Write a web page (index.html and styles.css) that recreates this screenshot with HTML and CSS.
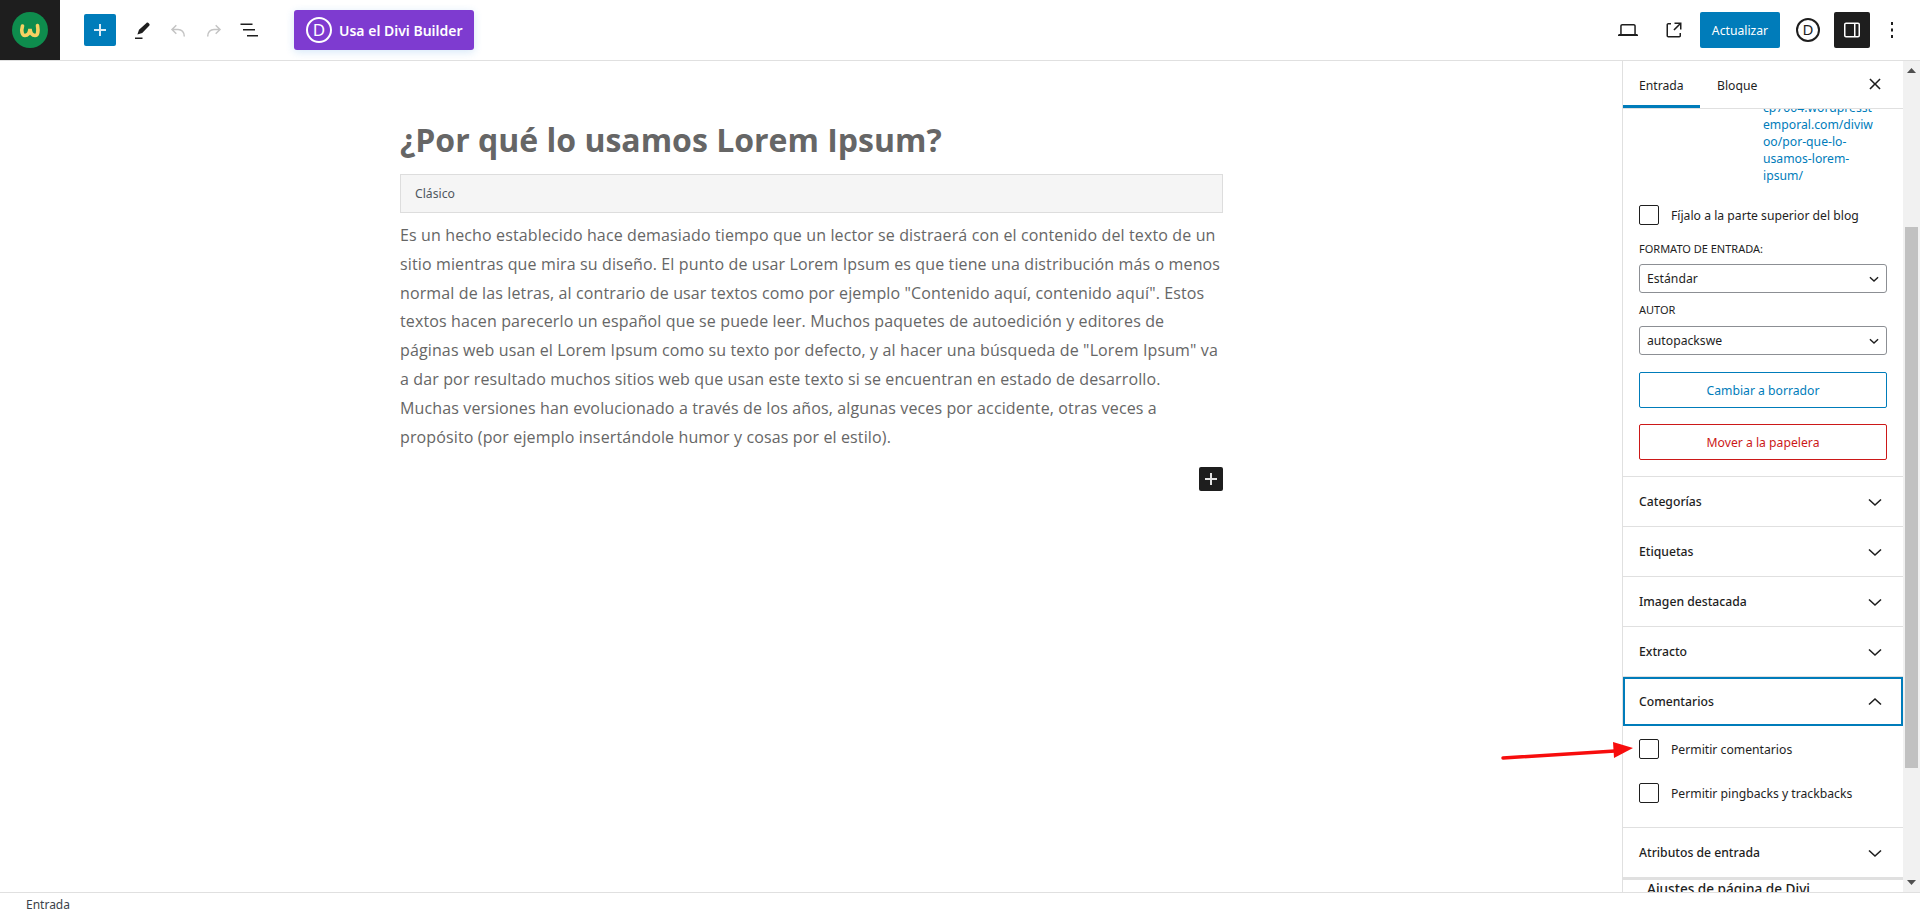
FILE: index.html
```html
<!DOCTYPE html>
<html lang="es">
<head>
    <meta charset="UTF-8">
    <title>Editar entrada</title>
    <link rel="stylesheet" href="styles.css">
</head>
<body>
    <header class="topbar">
        <div class="logo-box">
            <svg width="36" height="36" viewBox="0 0 36 36">
                <circle cx="18" cy="18" r="18" fill="#0e8c4d"/>
                <path d="M10.500 14c-1.500 5-.5 9.500 2.500 9.500 2.500 0 4.500-2.500 5-6.500 .5 4 2.500 6.500 5 6.500 3 0 3.500-4.500 2.500-10" fill="none" stroke="#f7d163" stroke-width="3.600" stroke-linecap="round"/>
            </svg>
        </div>
        <div class="tools">
            <button class="add-btn">
                <svg width="24" height="24" viewBox="0 0 24 24"><path d="M11 6h2v5h5v2h-5v5h-2v-5H6v-2h5z" fill="#dcebf5"/></svg>
            </button>
            <span class="tool tool-pen">
                <svg width="24" height="24" viewBox="0 0 24 24"><path d="M19 5.500c-1-1-1.800-1.200-2.500-.6l-7.500 6.800-1.600 4.800 4.800-1.500 7-7.200c.6-.7.700-1.400-.2-2.300zM5 19.500h7.500V21H5z" fill="#1e1e1e"/></svg>
            </span>
            <span class="tool">
                <svg width="24" height="24" viewBox="0 0 24 24"><path d="M18.300 18.500c0-4.700-2.700-7-6.300-7H6.500M10.300 7.300 6 11.500l4.300 4.200" fill="none" stroke="#c4c4c4" stroke-width="1.500"/></svg>
            </span>
            <span class="tool">
                <svg width="24" height="24" viewBox="0 0 24 24"><path d="M5.700 18.500c0-4.700 2.700-7 6.300-7h5.500M13.700 7.300l4.300 4.200-4.300 4.200" fill="none" stroke="#c4c4c4" stroke-width="1.500"/></svg>
            </span>
            <span class="tool">
                <svg width="24" height="24" viewBox="0 0 24 24"><path d="M2.500 5.500h12v1.500h-12zM5 11h12v1.500H5zM9 17h11v1.500H9z" fill="#1e1e1e"/></svg>
            </span>
        </div>
        <button class="divi-btn"><span class="divi-d">D</span>Usa el Divi Builder</button>

        <div class="topbar-right">
            <span class="tool">
                <svg width="24" height="24" viewBox="0 0 24 24"><path d="M20.500 16h-.7V8c0-1.100-.9-2-2-2H6.200c-1.100 0-2 .9-2 2v8h-.7c-.8 0-1.500.7-1.500 1v1h20v-1c0-.3-.7-1-1.500-1zM5.700 8c0-.3.200-.5.500-.5h11.600c.3 0 .5.200.5.500v8H5.700z" fill="#1e1e1e"/></svg>
            </span>
            <span class="tool tool-ext">
                <svg width="24" height="24" viewBox="0 0 24 24"><path d="M19.500 4.500h-7V6h4.400l-5.500 5.500 1.100 1.100L18 7.100v4.400h1.500zM17.500 17.800c0 .1-.1.200-.2.200H6.200c-.1 0-.2-.1-.2-.2V6.700c0-.1.100-.2.200-.2H9V5H6.200C5.500 5 4.500 5.800 4.500 6.700v11.100c0 .9 1 1.700 1.700 1.700h11.100c.9 0 1.700-.8 1.700-1.700V15h-1.500z" fill="#1e1e1e"/></svg>
            </span>
            <button class="update-btn">Actualizar</button>
            <span class="divi-circle">D</span>
            <button class="toggle-btn">
                <svg width="24" height="24" viewBox="0 0 24 24"><path d="M18 4.500H6c-1.100 0-2 .9-2 2v11c0 1.100.9 2 2 2h12c1.100 0 2-.9 2-2v-11c0-1.100-.9-2-2-2zM5.500 17.500v-11c0-.3.200-.5.500-.5h8v12H6c-.3 0-.5-.2-.5-.5zm13 0c0 .3-.2.500-.5.500h-2.500V6H18c.3 0 .5.200.5.500z" fill="#fff"/></svg>
            </button>
            <span class="tool tool-dots">
                <svg width="24" height="24" viewBox="0 0 24 24"><path d="M11 4h2v3h-2zM11 10.500h2v3h-2zM11 17h2v3h-2z" fill="#1e1e1e"/></svg>
            </span>
        </div>
    </header>

    <div class="workspace">
        <main class="editor">
            <div class="post">
                <h1 class="post-title">¿Por qué lo usamos Lorem Ipsum?</h1>
                <div class="classic-bar">Clásico</div>
                <p class="post-text">Es un hecho establecido hace demasiado tiempo que un lector se distraerá con el contenido del texto de un sitio mientras que mira su diseño. El punto de usar Lorem Ipsum es que tiene una distribución más o menos normal de las letras, al contrario de usar textos como por ejemplo "Contenido aquí, contenido aquí". Estos textos hacen parecerlo un español que se puede leer. Muchos paquetes de autoedición y editores de páginas web usan el Lorem Ipsum como su texto por defecto, y al hacer una búsqueda de "Lorem Ipsum" va a dar por resultado muchos sitios web que usan este texto si se encuentran en estado de desarrollo. Muchas versiones han evolucionado a través de los años, algunas veces por accidente, otras veces a propósito (por ejemplo insertándole humor y cosas por el estilo).</p>
                <div class="inserter-row">
                    <button class="inserter">
                        <svg width="24" height="24" viewBox="0 0 24 24"><path d="M11 6h2v5h5v2h-5v5h-2v-5H6v-2h5z" fill="#e4e4e4"/></svg>
                    </button>
                </div>
            </div>
        </main>

        <aside class="sidebar">
            <div class="sidebar-main">
                <div class="tabs">
                    <span class="tab tab-active">Entrada</span>
                    <span class="tab">Bloque</span>
                    <svg class="close-icon" width="24" height="24" viewBox="0 0 24 24"><path d="M7.500 6.400 12 10.900l4.500-4.500 1.100 1.100-4.500 4.500 4.500 4.500-1.100 1.100-4.500-4.500-4.500 4.500-1.100-1.100 4.500-4.500-4.500-4.500z" fill="#1e1e1e"/></svg>
                </div>
                <div class="panels">
                    <div class="panel-status">
                        <a class="permalink">cp7004.wordpresst<br>emporal.com/diviw<br>oo/por-que-lo-<br>usamos-lorem-<br>ipsum/</a>
                        <label class="check-row check-sticky"><span class="check"></span>Fíjalo a la parte superior del blog</label>
                        <div class="field-label">FORMATO DE ENTRADA:</div>
                        <div class="select-box select-format">Estándar
                            <svg width="14" height="14" viewBox="0 0 24 24"><path d="M5 9l7 6.500L19 9" fill="none" stroke="#1e1e1e" stroke-width="2.400"/></svg>
                        </div>
                        <div class="field-label field-label-author">AUTOR</div>
                        <div class="select-box">autopackswe
                            <svg width="14" height="14" viewBox="0 0 24 24"><path d="M5 9l7 6.500L19 9" fill="none" stroke="#1e1e1e" stroke-width="2.400"/></svg>
                        </div>
                        <button class="outline-btn outline-blue">Cambiar a borrador</button>
                        <button class="outline-btn outline-red">Mover a la papelera</button>
                    </div>

                    <div class="panel-row">Categorías<svg width="24" height="24" viewBox="0 0 24 24"><path d="M6 9.500l6 5.500 6-5.500" fill="none" stroke="#1e1e1e" stroke-width="1.600"/></svg></div>
                    <div class="panel-row">Etiquetas<svg width="24" height="24" viewBox="0 0 24 24"><path d="M6 9.500l6 5.500 6-5.500" fill="none" stroke="#1e1e1e" stroke-width="1.600"/></svg></div>
                    <div class="panel-row">Imagen destacada<svg width="24" height="24" viewBox="0 0 24 24"><path d="M6 9.500l6 5.500 6-5.500" fill="none" stroke="#1e1e1e" stroke-width="1.600"/></svg></div>
                    <div class="panel-row">Extracto<svg width="24" height="24" viewBox="0 0 24 24"><path d="M6 9.500l6 5.500 6-5.500" fill="none" stroke="#1e1e1e" stroke-width="1.600"/></svg></div>

                    <div class="panel-row panel-focus">Comentarios<svg width="24" height="24" viewBox="0 0 24 24"><path d="M6 14.500l6-5.500 6 5.500" fill="none" stroke="#1e1e1e" stroke-width="1.600"/></svg></div>
                    <div class="panel-body">
                        <label class="check-row"><span class="check"></span>Permitir comentarios</label>
                        <label class="check-row"><span class="check"></span>Permitir pingbacks y trackbacks</label>
                    </div>

                    <div class="panel-row panel-last">Atributos de entrada<svg width="24" height="24" viewBox="0 0 24 24"><path d="M6 9.500l6 5.500 6-5.500" fill="none" stroke="#1e1e1e" stroke-width="1.600"/></svg></div>
                    <div class="divi-settings">Ajustes de página de Divi</div>
                </div>
            </div>
            <div class="scrollbar">
                <svg class="scroll-arrow" width="9" height="5" viewBox="0 0 9 5"><path d="M4.500 0 9 5H0z" fill="#505050"/></svg>
                <div class="scroll-track"><div class="scroll-thumb"></div></div>
                <svg class="scroll-arrow" width="9" height="5" viewBox="0 0 9 5"><path d="M0 0h9L4.500 5z" fill="#505050"/></svg>
            </div>
        </aside>
    </div>

    <footer class="statusbar">Entrada</footer>

    <!-- flecha roja encima de la captura -->
    <svg class="red-arrow" width="140" height="24" viewBox="0 0 140 24">
        <path d="M2 18 114 11" stroke="#f70d0d" stroke-width="3.500" stroke-linecap="round"/>
        <path d="M112 2 132 8 113 18z" fill="#f70d0d"/>
    </svg>
</body>
</html>
```

FILE: styles.css
```css
* {
    box-sizing: border-box;
}

html, body {
    height: 100%;
}

body {
    margin: 0;
    display: flex;
    flex-direction: column;
    height: 917px;
    overflow: hidden;
    background-color: #fff;
    color: #1e1e1e;
    font-family: "Noto Sans", Arial, sans-serif;
    font-size: 12.200px;
}

button {
    border: none;
    padding: 0;
    font-family: inherit;
    cursor: pointer;
}

/* Barra superior */
.topbar {
    flex: 0 0 61px;
    display: flex;
    align-items: center;
    border-bottom: 1px solid #e0e0e0;
}

.logo-box {
    width: 60px;
    height: 60px;
    background-color: #1e1e1e;
    display: flex;
    align-items: center;
    justify-content: center;
}

.tools {
    display: flex;
    align-items: center;
    margin-left: 24px;
}

.tool {
    width: 36px;
    height: 36px;
    display: flex;
    align-items: center;
    justify-content: center;
}

.tool-pen {
    margin-left: 8px;
}

.add-btn {
    width: 32px;
    height: 32px;
    background-color: #007cba;
    border-radius: 2px;
    display: flex;
    align-items: center;
    justify-content: center;
}

.divi-btn {
    margin-left: 26px;
    width: 180px;
    height: 40px;
    display: flex;
    align-items: center;
    gap: 7px;
    padding-left: 12px;
    background-color: #7e3bd0;
    color: #fff;
    font-size: 14px;
    font-weight: 600;
    border-radius: 3px;
    box-shadow: 0 2px 8px rgba(43, 135, 218, 0.2);
}

.divi-d {
    width: 26px;
    height: 26px;
    border: 2px solid #fff;
    border-radius: 50%;
    font-size: 17px;
    font-weight: 400;
    line-height: 21px;
    text-align: center;
}

.topbar-right {
    margin-left: auto;
    display: flex;
    align-items: center;
}

.tool-ext {
    margin-left: 10px;
}

.update-btn {
    margin-left: 8px;
    width: 80px;
    height: 36px;
    background-color: #007cba;
    color: #fff;
    font-size: 12.200px;
    border-radius: 2px;
}

.divi-circle {
    margin-left: 16px;
    width: 24px;
    height: 24px;
    border: 2px solid #1e1e1e;
    border-radius: 50%;
    font-size: 15px;
    line-height: 19px;
    text-align: center;
}

.toggle-btn {
    margin-left: 14px;
    width: 36px;
    height: 36px;
    background-color: #1e1e1e;
    border-radius: 2px;
    display: flex;
    align-items: center;
    justify-content: center;
}

.tool-dots {
    margin-left: 4px;
    margin-right: 10px;
}

/* Zona central */
.workspace {
    flex: 1;
    display: flex;
    min-height: 0;
}

.editor {
    flex: 1;
    min-width: 0;
}

.post {
    width: 823px;
    margin-left: 400px;
}

.post-title {
    margin: 0;
    padding-top: 57px;
    font-family: "Open Sans", sans-serif;
    font-size: 32px;
    font-weight: 700;
    line-height: 44px;
    color: #666;
}

.classic-bar {
    margin-top: 12px;
    height: 39px;
    padding-left: 14px;
    background-color: #f5f5f5;
    border: 1px solid #ddd;
    font-size: 12.200px;
    line-height: 37px;
    color: #50575e;
}

.post-text {
    margin: 8px 0 0;
    font-family: "Open Sans", sans-serif;
    font-size: 16px;
    letter-spacing: 0.130px;
    line-height: 28.800px;
    color: #666;
}

.inserter-row {
    margin-top: 16px;
    display: flex;
    justify-content: flex-end;
}

.inserter {
    width: 24px;
    height: 24px;
    background-color: #1e1e1e;
    border-radius: 2px;
    display: flex;
    align-items: center;
    justify-content: center;
}

/* Barra lateral */
.sidebar {
    flex: 0 0 298px;
    display: flex;
    border-left: 1px solid #e0e0e0;
}

.sidebar-main {
    flex: 1;
    min-width: 0;
    display: flex;
    flex-direction: column;
}

.tabs {
    flex: 0 0 47px;
    display: flex;
    align-items: stretch;
    border-bottom: 1px solid #e0e0e0;
    position: relative;
    z-index: 1;
    background-color: #fff;
}

.tab {
    padding: 0 16px;
    line-height: 49px;
    height: 47px;
}

.tab-active {
    width: 77px;
    box-shadow: inset 0 -3px 0 #007cba;
}

.tabs .tab + .tab {
    margin-left: 1px;
}

.close-icon {
    margin: 11px 16px 0 auto;
}

.panels {
    flex: 1;
    overflow: hidden;
}

.panel-status {
    padding: 0 16px 16px;
    margin-top: -10px;
    border-bottom: 1px solid #e0e0e0;
}

.permalink {
    display: block;
    margin-left: 124px;
    line-height: 17px;
    color: #007cba;
    word-break: break-all;
}

.check-row {
    display: flex;
    align-items: center;
    gap: 12px;
    height: 20px;
}

.check {
    flex: 0 0 20px;
    height: 20px;
    border: 1px solid #1e1e1e;
    border-radius: 2px;
}

.check-sticky {
    margin-top: 21px;
}

.field-label {
    margin-top: 14px;
    font-size: 11px;
    line-height: 20px;
}

.field-label-author {
    margin-top: 7px;
}

.select-box {
    margin-top: 6px;
    height: 29px;
    padding: 0 5px 0 7px;
    display: flex;
    align-items: center;
    justify-content: space-between;
    border: 1px solid #8c8f94;
    border-radius: 3px;
}

.select-format {
    margin-top: 5px;
}

.select-box + .field-label {
    margin-top: 7px;
}

.outline-btn {
    display: block;
    width: 100%;
    height: 36px;
    background-color: #fff;
    border-radius: 2px;
    font-size: 12.200px;
}

.outline-blue {
    margin-top: 17px;
    border: 1px solid #007cba;
    color: #007cba;
}

.outline-red {
    margin-top: 16px;
    border: 1px solid #cc1818;
    color: #cc1818;
}

.panel-row {
    height: 50px;
    padding: 0 16px;
    display: flex;
    align-items: center;
    justify-content: space-between;
    border-bottom: 1px solid #e0e0e0;
    font-weight: 500;
}

.panel-focus {
    height: 49px;
    border: 2px solid #007cba;
    padding: 0 14px;
}

.panel-body {
    padding: 13px 16px 24px;
    display: flex;
    flex-direction: column;
    gap: 24px;
    border-bottom: 1px solid #e0e0e0;
}

.panel-last {
    height: 52px;
    border-bottom: 3px solid #e0e0e0;
}

.divi-settings {
    padding: 0 24px;
    font-size: 13.600px;
    font-weight: 500;
    line-height: 18px;
}

.scrollbar {
    flex: 0 0 17px;
    display: flex;
    flex-direction: column;
    align-items: center;
    background-color: #f1f1f1;
}

.scroll-arrow {
    flex: none;
    margin: 7px 0;
}

.scroll-track {
    flex: 1;
    width: 100%;
    padding: 147px 2px 0;
}

.scroll-thumb {
    height: 541px;
    background-color: #c1c1c1;
}

/* Pie */
.statusbar {
    flex: 0 0 25px;
    padding-left: 26px;
    border-top: 1px solid #e0e0e0;
    font-size: 12px;
    line-height: 24px;
    color: #3c434a;
}

.red-arrow {
    position: absolute;
    left: 1501px;
    top: 740px;
}
```
